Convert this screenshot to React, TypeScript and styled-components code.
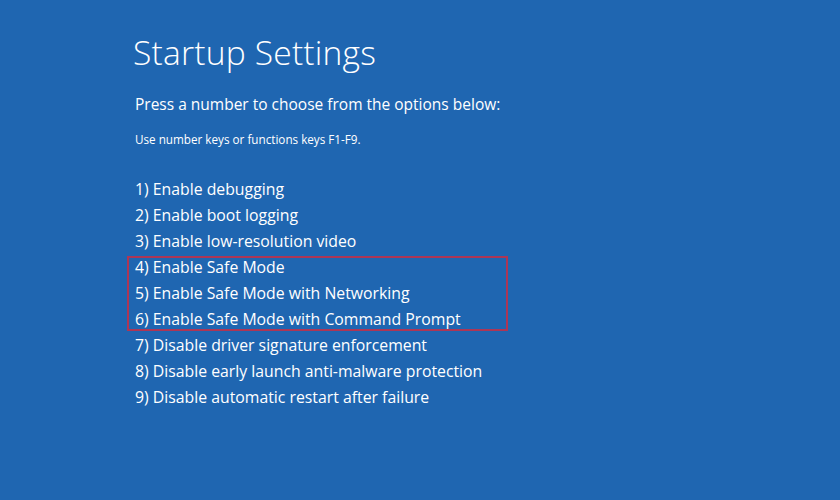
import React from "react";
import styled, { createGlobalStyle } from "styled-components";

const GlobalStyle = createGlobalStyle`
  html, body {
    margin: 0;
    padding: 0;
    background: #1f66b1;
  }
`;

const Screen = styled.div`
  width: 840px;
  height: 500px;
  background: #1f66b1;
  color: #ffffff;
  font-family: "Open Sans", "Noto Sans", sans-serif;
  padding: 29px 0 0 133px;
  box-sizing: border-box;
  overflow: hidden;
`;

const Title = styled.h1`
  margin: 0;
  font-size: 33.6px;
  font-weight: 300;
  line-height: 46px;
  letter-spacing: 0.2px;
`;

const Prompt = styled.p`
  margin: 18px 0 0 2px;
  font-size: 15.5px;
  font-weight: 400;
  line-height: 22px;
`;

const Hint = styled.p`
  margin: 16px 0 0 2px;
  font-size: 11.7px;
  line-height: 16px;
`;

const Options = styled.div`
  margin-top: 29px;
  display: flex;
  flex-direction: column;
`;

const Highlight = styled.div`
  position: relative;
  display: flex;
  flex-direction: column;

  /* red marker round the safe mode options */
  &::after {
    content: "";
    position: absolute;
    top: 2px;
    bottom: 1px;
    left: -6px;
    width: 381px;
    border: 2px solid #ad3656;
    box-sizing: border-box;
    pointer-events: none;
  }
`;

const Option = styled.div`
  margin-left: 2px;
  font-size: 15.8px;
  line-height: 26px;
  white-space: nowrap;
`;

const before = [
  "1) Enable debugging",
  "2) Enable boot logging",
  "3) Enable low-resolution video",
];

const marked = [
  "4) Enable Safe Mode",
  "5) Enable Safe Mode with Networking",
  "6) Enable Safe Mode with Command Prompt",
];

const after = [
  "7) Disable driver signature enforcement",
  "8) Disable early launch anti-malware protection",
  "9) Disable automatic restart after failure",
];

const App: React.FC = () => {
  return (
    <>
      <GlobalStyle />
      <Screen>
        <Title>Startup Settings</Title>
        <Prompt>Press a number to choose from the options below:</Prompt>
        <Hint>Use number keys or functions keys F1-F9.</Hint>
        <Options>
          {before.map((t) => (
            <Option key={t}>{t}</Option>
          ))}
          <Highlight>
            {marked.map((t) => (
              <Option key={t}>{t}</Option>
            ))}
          </Highlight>
          {after.map((t) => (
            <Option key={t}>{t}</Option>
          ))}
        </Options>
      </Screen>
    </>
  );
};

export default App;
